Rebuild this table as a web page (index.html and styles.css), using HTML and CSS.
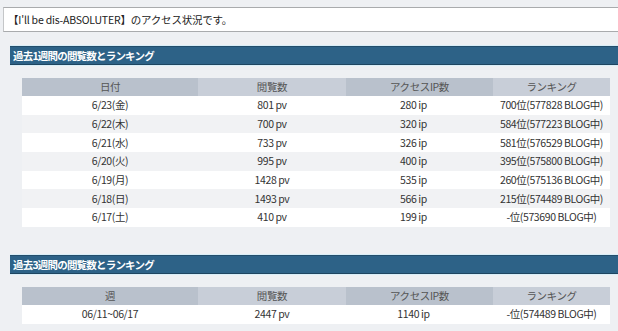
FILE: index.html
```html
<!DOCTYPE html>
<html lang="ja">
<head>
<meta charset="utf-8">
<link rel="stylesheet" href="styles.css">
</head>
<body>
<div class="intro">【I'll be dis-ABSOLUTER】のアクセス状況です。</div>

<section class="sec sec-first">
  <h2 class="bar">過去1週間の閲覧数とランキング</h2>
  <table class="stats">
    <thead>
      <tr><th class="c1">日付</th><th class="c2">閲覧数</th><th class="c3">アクセスIP数</th><th class="c4">ランキング</th></tr>
    </thead>
    <tbody>
      <tr><td>6/23(金)</td><td>801 pv</td><td class="ip">280 ip</td><td>700位(577828 BLOG中)</td></tr>
      <tr><td>6/22(木)</td><td>700 pv</td><td class="ip">320 ip</td><td>584位(577223 BLOG中)</td></tr>
      <tr><td>6/21(水)</td><td>733 pv</td><td class="ip">326 ip</td><td>581位(576529 BLOG中)</td></tr>
      <tr><td>6/20(火)</td><td>995 pv</td><td class="ip">400 ip</td><td>395位(575800 BLOG中)</td></tr>
      <tr><td>6/19(月)</td><td>1428 pv</td><td class="ip">535 ip</td><td>260位(575136 BLOG中)</td></tr>
      <tr><td>6/18(日)</td><td>1493 pv</td><td class="ip">566 ip</td><td>215位(574489 BLOG中)</td></tr>
      <tr><td>6/17(土)</td><td>410 pv</td><td class="ip">199 ip</td><td>-位(573690 BLOG中)</td></tr>
    </tbody>
  </table>
</section>

<section class="sec sec-second">
  <h2 class="bar">過去3週間の閲覧数とランキング</h2>
  <table class="stats">
    <thead>
      <tr><th class="c1">週</th><th class="c2">閲覧数</th><th class="c3">アクセスIP数</th><th class="c4">ランキング</th></tr>
    </thead>
    <tbody>
      <tr><td>06/11~06/17</td><td>2447 pv</td><td class="ip">1140 ip</td><td>-位(574489 BLOG中)</td></tr>
    </tbody>
  </table>
</section>
</body>
</html>
```

FILE: styles.css
```css
html, body {
  margin: 0;
  padding: 0;
  background: #eef0f3;
  font-family: "Noto Sans CJK JP", "DejaVu Sans", sans-serif;
  font-size: 11px;
  color: #333;
}

.intro {
  margin: 7px 0 0 3px;
  height: 23px;
  line-height: 23px;
  padding-left: 4px;
  background: #ffffff;
  border-top: 1px solid #a9abad;
  border-bottom: 1px solid #a9abad;
  border-left: 1px solid #c4c6c8;
  font-size: 10.5px;
  letter-spacing: -0.2px;
  color: #222;
  white-space: nowrap;
}

.sec-first {
  margin-top: 14px;
}

.sec-second {
  margin-top: 28px;
}

.bar {
  margin: 0 0 0 10px;
  height: 17px;
  line-height: 17px;
  padding-left: 3px;
  background: #2d6287;
  border-top: 1px solid #234e6c;
  border-bottom: 1px solid #1e4560;
  box-shadow: 0 -1px 0 #d9eef8, 0 1px 0 #d9eef8;
  color: #ffffff;
  font-size: 10.5px;
  font-weight: bold;
  letter-spacing: -0.8px;
}

.stats {
  margin: 13px 0 0 22px;
  width: 588px;
  border-collapse: collapse;
  table-layout: fixed;
  font-size: 10.5px;
  letter-spacing: -0.4px;
}

.stats th,
.stats td {
  padding: 0;
  text-align: center;
  white-space: nowrap;
  font-weight: normal;
}

.stats th {
  height: 18px;
  line-height: 18px;
  color: #555;
}

.stats .c1 { width: 176px; background: #b9c1cc; }
.stats .c2 { width: 148px; background: #c8ced8; }
.stats .c3 { width: 147px; background: #b9c1cc; }
.stats .c4 { width: 117px; background: #c8ced8; }

.stats td {
  height: 18.7px;
  line-height: 18px;
  color: #333;
}

.stats td.ip {
  text-indent: -12px;
}

.stats tbody tr:nth-child(odd) { background: #ffffff; }
.stats tbody tr:nth-child(even) { background: #f1f2f4; }
```
